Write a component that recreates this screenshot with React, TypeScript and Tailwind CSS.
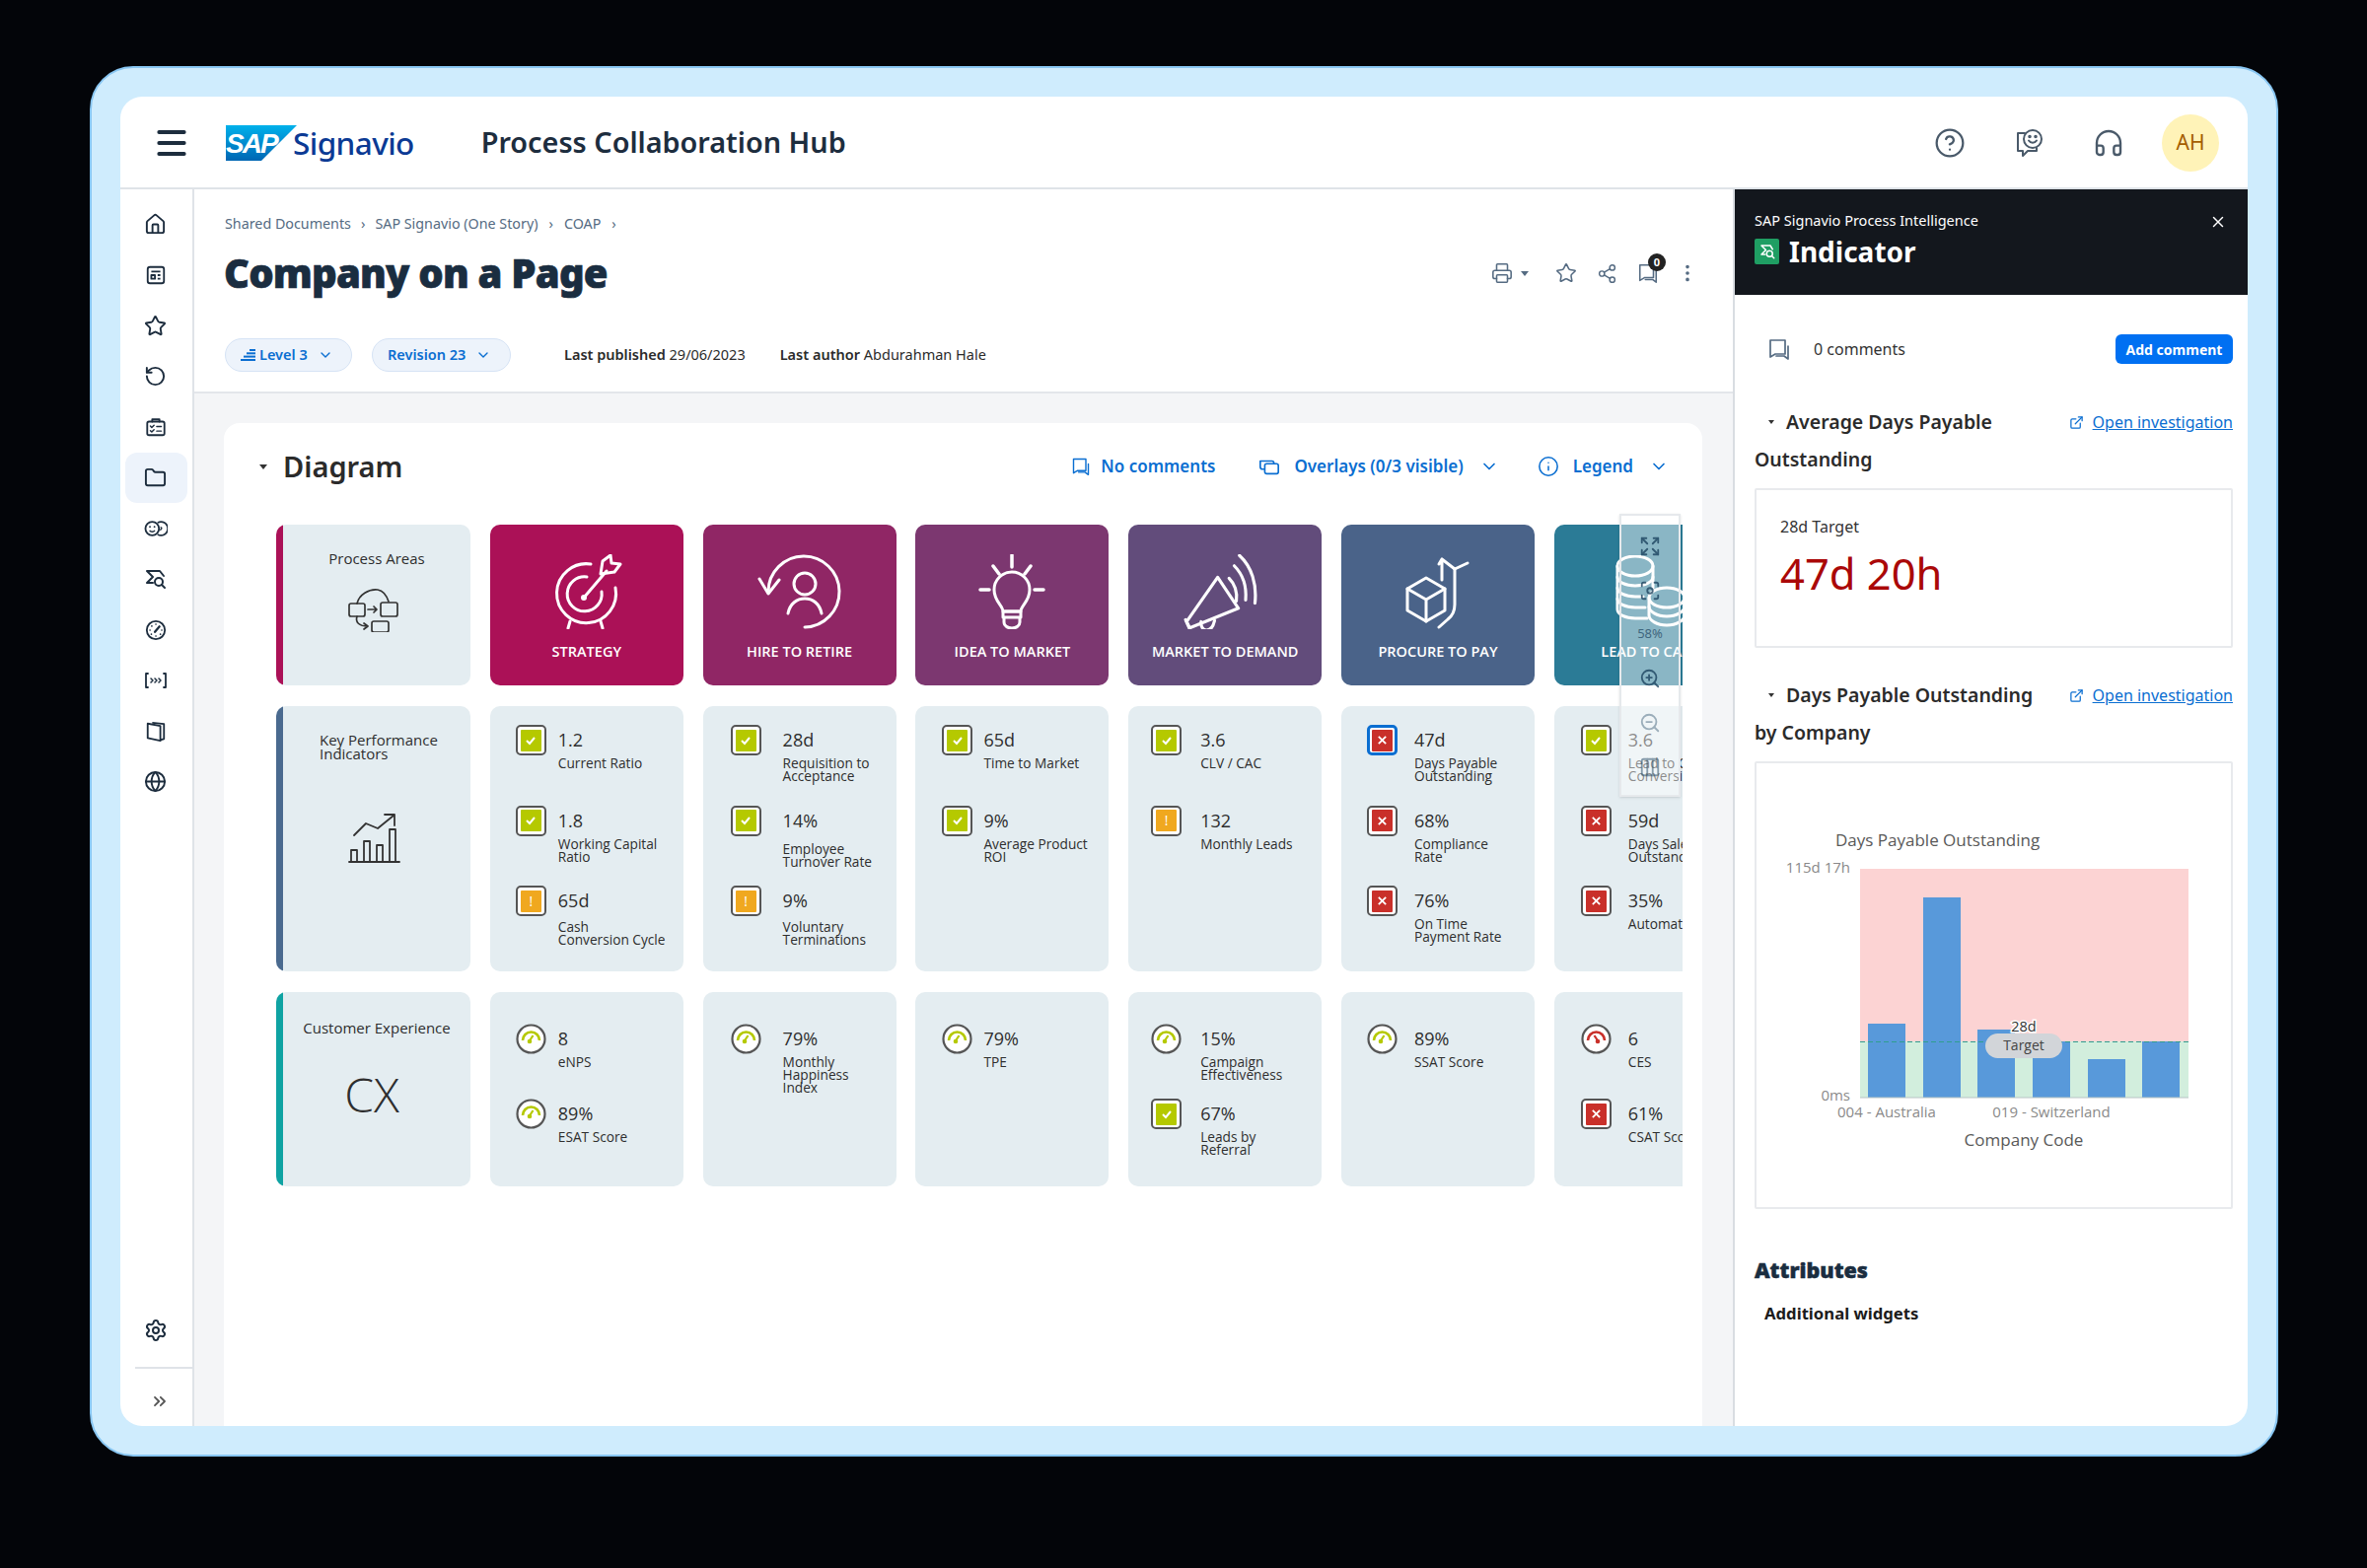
import React from "react";
import {
  Home, Star, RotateCcw, Folder, Globe, Settings, ChevronsRight, CircleHelp, Headphones, Printer, Share2,
  EllipsisVertical, Info, ChevronDown, X, ExternalLink, Expand, Focus, ZoomIn, ZoomOut, Columns3, Menu,
} from "lucide-react";

const ink = "#1d2d3e";

const Bubble = ({ size = 22, color = "#556b82" }: { size?: number; color?: string }) => (
  <svg width={size} height={size} viewBox="0 0 24 24" fill="none" stroke={color} strokeWidth={1.7} strokeLinejoin="round" strokeLinecap="round">
    <path d="M3 3h15v14H8l-5 3z" />
    <path d="M21 9v13l-4-3H9" />
  </svg>
);

const SideNews = () => (
  <svg width="22" height="22" viewBox="0 0 24 24" fill="none" stroke={ink} strokeWidth="2" strokeLinejoin="round">
    <rect x="3" y="3" width="18" height="18" rx="2.5" />
    <path d="M7 8h10M7 12h4v4H7zM14 12h3M14 16h3" />
  </svg>
);
const SideCase = () => (
  <svg width="22" height="22" viewBox="0 0 24 24" fill="none" stroke={ink} strokeWidth="2" strokeLinejoin="round" strokeLinecap="round">
    <path d="M8 6V3.5h8V6" />
    <rect x="2.5" y="6" width="19" height="15" rx="2" />
    <path d="M6 11l1.5 1.5L10 10M6 16l1.5 1.5L10 15M13 11.5h5M13 16.5h5" strokeWidth="1.6" />
  </svg>
);
const SideFaces = () => (
  <svg width="24" height="22" viewBox="0 0 26 24" fill="none" stroke={ink} strokeWidth="2">
    <circle cx="9" cy="12" r="7.5" />
    <path d="M15 5.5a7.5 7.5 0 1 1 0 13" />
    <path d="M6 14c1.500 2 4.500 2 6 0M18 10.500c2 0 2 3-1 3" strokeWidth="1.500" />
    <circle cx="6.500" cy="10" r="1" fill={ink} stroke="none" />
    <circle cx="11.500" cy="10" r="1" fill={ink} stroke="none" />
  </svg>
);
const SideSigma = () => (
  <svg width="24" height="22" viewBox="0 0 24 22" fill="none" stroke={ink} strokeWidth="2" strokeLinecap="round" strokeLinejoin="round">
    <path d="M20 8L16 3H3l6 6-6 6h6" />
    <circle cx="15" cy="14" r="4" />
    <path d="M18 17l3 3" />
  </svg>
);
const SideGauge = () => (
  <svg width="22" height="22" viewBox="0 0 24 24" fill="none" stroke={ink} strokeWidth="2" strokeLinecap="round">
    <circle cx="12" cy="12" r="10" />
    <path d="M11 14l5-6" strokeWidth="2.500" />
    <path d="M5.500 12h.1M7.500 7.500h.1M12 5.500h.1M18.500 12h.1M7 16.500h.1M17 16.500h.1M12 18.500h.1" strokeWidth="1.800" />
  </svg>
);
const SideBracket = () => (
  <svg width="24" height="22" viewBox="0 0 24 22" fill="none" stroke={ink} strokeWidth="1.800" strokeLinecap="round" strokeLinejoin="round">
    <path d="M4 4H2v14h2M20 4h2v14h-2" />
    <path d="M7 9l2 2-2 2M11 9l2 2-2 2M15 9l2 2-2 2" strokeWidth="1.500" />
  </svg>
);
const SideBook = () => (
  <svg width="22" height="22" viewBox="0 0 24 24" fill="none" stroke={ink} strokeWidth="2" strokeLinejoin="round">
    <path d="M3 3l14 2.500V22L3 19z" />
    <path d="M8 2l13 1.500V20l-4 1" />
  </svg>
);

const GreenSigma = () => (
  <span className="flex h-[26px] w-[25px] items-center justify-center rounded-[2px] bg-[#1f9e63]">
    <svg width="18" height="18" viewBox="0 0 24 22" fill="none" stroke="#fff" strokeWidth="2" strokeLinecap="round" strokeLinejoin="round">
      <path d="M19 8L16 3H4l6 6-6 6h5" />
      <circle cx="15" cy="14" r="4" />
      <path d="M18 17l3 3" />
    </svg>
  </span>
);

const SapLogo = () => (
  <svg width="72" height="36" viewBox="0 0 72 36">
    <defs>
      <linearGradient id="sapg" x1="0" y1="0" x2="0" y2="1">
        <stop offset="0" stopColor="#00b1eb" />
        <stop offset="1" stopColor="#0066b3" />
      </linearGradient>
    </defs>
    <polygon points="0,0 72,0 36,36 0,36" fill="url(#sapg)" />
    <text x="0" y="28" fontFamily="'Liberation Sans', sans-serif" fontWeight="700" fontStyle="italic" fontSize="28" fill="#fff" letterSpacing="-2">SAP</text>
  </svg>
);

/* ---------- process pictograms ---------- */
const picto = { fill: "none", stroke: "#fff", strokeWidth: 3, strokeLinecap: "round" as const, strokeLinejoin: "round" as const };

const TargetIcon = () => (
  <svg width="72" height="76" viewBox="0 0 72 76" {...picto}>
    <path d="M40 10A30 30 0 1 0 65 34" />
    <path d="M36 23A17.500 17.500 0 1 0 51 38" />
    <path d="M33 44L56 17" />
    <circle cx="33" cy="44" r="1.500" />
    <path d="M50 20l2-13 8-6 1 8 9 1-6 8z" />
    <path d="M19 68l-2 7M50 68l2 7" />
  </svg>
);
const CycleIcon = () => (
  <svg width="86" height="76" viewBox="0 0 86 76" {...picto}>
    <path d="M11 38A36 36 0 1 1 48 74" />
    <path d="M2 25l9 15 11-14" />
    <circle cx="48" cy="30" r="11" />
    <path d="M31 60c2-10 9-15 17-15s15 5 17 15" />
  </svg>
);
const BulbIcon = () => (
  <svg width="72" height="76" viewBox="0 0 72 76" {...picto}>
    <path d="M36 1v12M17 12l6 8M55 12l-6 8M4 36h9M59 36h9" strokeWidth="3.500" />
    <path d="M27 58c0-6-9-10-9-22a18 18 0 0 1 36 0c0 12-9 16-9 22z" />
    <path d="M27 58h18v6H27zM28 64h16v5a8 6 0 0 1-16 0z" />
  </svg>
);
const MegaIcon = () => (
  <svg width="84" height="76" viewBox="0 0 80 72" {...picto}>
    <path d="M33 22L3 65l3 6 47-19z" />
    <path d="M2 63l4 9M17 65c-1 10 10 12 13-1" />
    <path d="M44 23c6 6 8 14 7 22" />
    <path d="M49 11c9 9 12 21 11 33" />
    <path d="M54 1c12 11 17 28 15 46" />
  </svg>
);
const BoxIcon = () => (
  <svg width="68" height="76" viewBox="0 0 68 76" {...picto}>
    <path d="M22 24L3 35v22l19 11 19-11V35z" />
    <path d="M3 35l19 11 19-11M22 46v22" />
    <path d="M38 26V5M38 5l-3 5M38 5l13 10 13-6" />
    <path d="M51 15v36c0 8-3 12-7 15l-9 8" />
  </svg>
);
const CoinsIcon = () => (
  <svg width="72" height="74" viewBox="0 0 72 74" {...picto}>
    <ellipse cx="20" cy="11" rx="18" ry="10" />
    <path d="M2 11v44c0 5 8 9 18 9h12" />
    <path d="M38 11v22" />
    <path d="M2 22c0 5 8 9 18 9s18-4 18-9M2 33c0 5 8 9 18 9h8M2 44c0 5 8 9 18 9h10" />
    <ellipse cx="52" cy="43" rx="18" ry="10" />
    <path d="M34 43v18c0 5 8 10 18 10s18-5 18-10V43" />
    <path d="M34 52c0 5 8 10 18 10s18-5 18-10" />
  </svg>
);

const FlowIcon = () => (
  <svg width="54" height="44" viewBox="0 0 54 44" fill="none" stroke="#333" strokeWidth="1.700" strokeLinejoin="round" strokeLinecap="round">
    <rect x="1" y="15" width="16" height="13" rx="2" />
    <rect x="33" y="14" width="17" height="14" rx="2" />
    <rect x="24" y="33" width="17" height="11" rx="2" />
    <path d="M20 21h9M26 18l3 3-3 3" />
    <path d="M9 15C11 6 21 0 30 1c6 1 9 6 11 12" />
    <path d="M9 28c-2 6 2 10 11 10M16 35l4 3-4 3" />
  </svg>
);
const KpiIcon = () => (
  <svg width="54" height="50" viewBox="0 0 54 50" fill="none" stroke="#333" strokeWidth="1.800" strokeLinejoin="round" strokeLinecap="round">
    <path d="M1 49h51" />
    <path d="M3 49V37h6v12M16 49V28h6v21M29 49V32h6v17M42 49V16h6v33" />
    <path d="M6 22L18 10l12 5L46 2M37 1h10v11" />
  </svg>
);

/* ---------- status ---------- */
type Status = "ok" | "warn" | "bad" | "sel" | "gok" | "gbad";

const StatusIcon = ({ s }: { s: Status }) => {
  if (s === "gok" || s === "gbad") {
    const c = s === "gok" ? "#b5c900" : "#c9302a";
    return (
      <svg width="31" height="31" viewBox="0 0 31 31" fill="#fff" className="shrink-0">
        <circle cx="15.500" cy="15.500" r="14" stroke="#555" strokeWidth="2.200" />
        <path d="M7 17a8.500 8.500 0 0 1 17 0" fill="none" stroke={c} strokeWidth="2.600" />
        {s === "gok" ? (
          <path d="M13.500 18l4-6" stroke={c} strokeWidth="2.200" />
        ) : (
          <path d="M17.500 18l-4-6" stroke={c} strokeWidth="2.200" />
        )}
        <circle cx={s === "gok" ? 14 : 17} cy="18" r="2.300" fill={c} />
      </svg>
    );
  }
  const bg = s === "ok" ? "bg-[#b5c900]" : s === "warn" ? "bg-[#f0a81f]" : "bg-[#c9302a]";
  const frame = s === "sel" ? "border-[#0a6ed1] border-[3px]" : "border-[#555] border-2";
  return (
    <span className={`flex h-[31px] w-[31px] shrink-0 items-center justify-center rounded-[5px] bg-white ${frame}`}>
      <span className={`flex h-[22px] w-[21px] items-center justify-center rounded-[1px] text-white ${bg}`}>
        {s === "ok" && (
          <svg width="12" height="12" viewBox="0 0 12 12" fill="none" stroke="#fff" strokeWidth="2"><path d="M2 6l3 3 5-6" /></svg>
        )}
        {s === "warn" && <span className="font-['Open_Sans',sans-serif] text-[14px] leading-none">!</span>}
        {(s === "bad" || s === "sel") && (
          <svg width="11" height="11" viewBox="0 0 12 12" fill="none" stroke="#fff" strokeWidth="2"><path d="M2 2l8 8M10 2l-8 8" /></svg>
        )}
      </span>
    </span>
  );
};

type K = { s: Status; v: string; l: string[]; d?: number };

const Cell = ({ items, pl, gap, row3 }: { items: K[]; pl: number; gap: number; row3?: boolean }) => (
  <div
    className={`flex h-full flex-col rounded-[10px] bg-[#e4edf1] font-['Open_Sans',sans-serif] text-[#2e2e2e] ${row3 ? "pt-[32px]" : "pt-[19px]"}`}
    style={{ paddingLeft: pl }}
  >
    {items.map((k) => (
      <div key={k.v + k.l[0]} className={`flex ${row3 ? "h-[76px]" : "h-[81.500px]"}`} style={{ columnGap: gap }}>
        <StatusIcon s={k.s} />
        <div className="flex flex-col pt-[3px]">
          <span className="text-[18px] font-medium leading-[24px] whitespace-nowrap">{k.v}</span>
          <span className="text-[13.700px] font-medium leading-[13px] whitespace-nowrap" style={{ marginTop: 5 + (k.d ?? 0) }}>
            {k.l.map((t) => (
              <span key={t} className="block">{t}</span>
            ))}
          </span>
        </div>
      </div>
    ))}
  </div>
);

const Rail = ({ color, children }: { color: string; children: React.ReactNode }) => (
  <div className="h-full overflow-hidden rounded-[10px] bg-[#e4edf1] font-['Open_Sans',sans-serif] text-[#2e2e2e]">
    <div className="flex h-full border-l-[7px]" style={{ borderColor: color }}>
      <div className="flex-1">{children}</div>
    </div>
  </div>
);

const Proc = ({ color, label, icon }: { color: string; label: string; icon: React.ReactNode }) => (
  <div className="flex h-full flex-col items-center rounded-[10px] pt-[30px] font-['Open_Sans',sans-serif] text-white" style={{ backgroundColor: color }}>
    <div className="flex h-[76px] items-center justify-center">{icon}</div>
    <span className="mt-[13px] whitespace-nowrap text-[14.500px] font-semibold leading-[20px]">{label}</span>
  </div>
);

const cols = [
  { pl: 26, gap: 12 },
  { pl: 28, gap: 22 },
  { pl: 27, gap: 11 },
  { pl: 23, gap: 19 },
  { pl: 26, gap: 17 },
  { pl: 27, gap: 17 },
];

const kpis: K[][] = [
  [
    { s: "ok", v: "1.2", l: ["Current Ratio"] },
    { s: "ok", v: "1.8", l: ["Working Capital", "Ratio"] },
    { s: "warn", v: "65d", l: ["Cash", "Conversion Cycle"], d: 3 },
  ],
  [
    { s: "ok", v: "28d", l: ["Requisition to", "Acceptance"] },
    { s: "ok", v: "14%", l: ["Employee", "Turnover Rate"], d: 5 },
    { s: "warn", v: "9%", l: ["Voluntary", "Terminations"], d: 3 },
  ],
  [
    { s: "ok", v: "65d", l: ["Time to Market"] },
    { s: "ok", v: "9%", l: ["Average Product", "ROI"] },
  ],
  [
    { s: "ok", v: "3.6", l: ["CLV / CAC"] },
    { s: "warn", v: "132", l: ["Monthly Leads"] },
  ],
  [
    { s: "sel", v: "47d", l: ["Days Payable", "Outstanding"] },
    { s: "bad", v: "68%", l: ["Compliance", "Rate"] },
    { s: "bad", v: "76%", l: ["On Time", "Payment Rate"] },
  ],
  [
    { s: "ok", v: "3.6", l: ["Lead to Cash", "Conversion"] },
    { s: "bad", v: "59d", l: ["Days Sales", "Outstanding"] },
    { s: "bad", v: "35%", l: ["Automation"] },
  ],
];

const cx: K[][] = [
  [
    { s: "gok", v: "8", l: ["eNPS"] },
    { s: "gok", v: "89%", l: ["ESAT Score"] },
  ],
  [{ s: "gok", v: "79%", l: ["Monthly", "Happiness", "Index"] }],
  [{ s: "gok", v: "79%", l: ["TPE"] }],
  [
    { s: "gok", v: "15%", l: ["Campaign", "Effectiveness"] },
    { s: "ok", v: "67%", l: ["Leads by", "Referral"] },
  ],
  [{ s: "gok", v: "89%", l: ["SSAT Score"] }],
  [
    { s: "gbad", v: "6", l: ["CES"] },
    { s: "bad", v: "61%", l: ["CSAT Score"] },
  ],
];

const sideIcons = [
  <Home key="a" size={23} color={ink} strokeWidth={2} />,
  <SideNews key="b" />,
  <Star key="c" size={23} color={ink} strokeWidth={2} />,
  <RotateCcw key="d" size={23} color={ink} strokeWidth={2} />,
  <SideCase key="e" />,
  <Folder key="f" size={23} color={ink} strokeWidth={2} />,
  <SideFaces key="g" />,
  <SideSigma key="h" />,
  <SideGauge key="i" />,
  <SideBracket key="j" />,
  <SideBook key="k" />,
  <Globe key="l" size={23} color={ink} strokeWidth={2} />,
];

const Section = ({ a, b }: { a: string; b: string }) => (
  <div>
    <div className="flex items-center justify-between">
      <div className="flex items-center">
        <span className="ml-[14px] mr-[12px] h-0 w-0 border-x-[3.500px] border-t-[4px] border-x-transparent border-t-[#333]" />
        <span className="text-[19.500px] font-semibold leading-[38px] text-[#2b2b2b]">{a}</span>
      </div>
      <div className="flex items-center gap-[9px] text-[16px] text-[#0a6ed1]">
        <ExternalLink size={15} />
        <span className="underline">Open investigation</span>
      </div>
    </div>
    <div className="text-[19.500px] font-semibold leading-[38px] text-[#2b2b2b]">{b}</div>
  </div>
);

const Chart = () => {
  const bars = [
    [1894, 1037],
    [1950, 909],
    [2005, 1043],
    [2061, 1055],
    [2117, 1073],
    [2172, 1055],
  ];
  return (
    <svg width="482" height="451" viewBox="1781 773 482 451" fontFamily="'Open Sans', sans-serif">
      <text x="1861" y="857" fontSize="17" fill="#595959">Days Payable Outstanding</text>
      <text x="1876" y="884" fontSize="15" fill="#8a8a8a" textAnchor="end">115d 17h</text>
      <text x="1876" y="1115" fontSize="15" fill="#8a8a8a" textAnchor="end">0ms</text>
      <rect x="1886" y="880" width="333" height="175" fill="#fcd3d3" />
      <rect x="1886" y="1055" width="333" height="57" fill="#d2eedd" />
      {bars.map(([x, y]) => (
        <rect key={x} x={x} y={y} width="38" height={1112 - y} fill="#5899da" />
      ))}
      <line x1="1886" x2="2219" y1="1055.500" y2="1055.500" stroke="#2f9e8f" strokeWidth="1" strokeDasharray="5 3" />
      <line x1="1886" x2="2219" y1="1112" y2="1112" stroke="#b8c4c4" strokeWidth="1" />
      <rect x="2013" y="1047" width="78" height="25" rx="12.500" fill="#d2d5d9" />
      <text x="2052" y="1045" fontSize="14.500" fill="#333" textAnchor="middle" stroke="#fff" strokeWidth="3" paintOrder="stroke">28d</text>
      <text x="2052" y="1064" fontSize="14" fill="#444" textAnchor="middle">Target</text>
      <text x="1913" y="1132" fontSize="15" fill="#8a8a8a" textAnchor="middle">004 - Australia</text>
      <text x="2080" y="1132" fontSize="15" fill="#8a8a8a" textAnchor="middle">019 - Switzerland</text>
      <text x="2052" y="1161" fontSize="17" fontWeight="500" fill="#595959" textAnchor="middle">Company Code</text>
    </svg>
  );
};

export default function App() {
  return (
    <div className="h-[1590px] w-[2400px] overflow-hidden bg-[#030509] pl-[91px] pt-[67px] font-['Noto_Sans',sans-serif]">
      <div className="h-[1410px] w-[2219px] rounded-[44px] border-2 border-[#88c6f2] bg-[#cfecfd] p-[29px]">
        <div className="flex h-full flex-col overflow-hidden rounded-[22px] bg-white">
          {/* top bar */}
          <header className="flex h-[94px] shrink-0 items-center border-b-2 border-[#dfe3e8] pl-[33px] pr-[29px] pt-[1px]">
            <Menu size={38} color={ink} strokeWidth={2.500} />
            <div className="ml-[36px] flex items-center">
              <SapLogo />
              <span className="-ml-[4px] text-[31.500px] font-medium leading-none tracking-[-0.6px] text-[#0b3a94]">Signavio</span>
            </div>
            <span className="ml-[68px] text-[28.800px] font-semibold leading-none text-[#1d2d3e]">Process Collaboration Hub</span>
            <div className="ml-auto flex items-center">
              <CircleHelp size={32} color="#4a5a6a" strokeWidth={1.700} />
              <span className="ml-[48px] flex h-[32px] w-[32px] items-center justify-center">
                <svg width="32" height="32" viewBox="0 0 32 32" fill="none" stroke="#4a5a6a" strokeWidth="2" strokeLinejoin="round" strokeLinecap="round">
                  <path d="M12 6H5v18h5v5l5-5h9v-3" />
                  <circle cx="20" cy="12" r="9" />
                  <path d="M16 13.500c2 3 6 3 8 0" />
                  <circle cx="17" cy="9.500" r=".8" fill="#4a5a6a" />
                  <circle cx="23" cy="9.500" r=".8" fill="#4a5a6a" />
                </svg>
              </span>
              <Headphones size={32} color="#4a5a6a" strokeWidth={1.800} className="ml-[49px]" />
              <span className="ml-[38px] flex h-[58px] w-[58px] items-center justify-center rounded-full bg-[#fff3b8] text-[21px] text-[#a45d00]">AH</span>
            </div>
          </header>

          <div className="flex min-h-0 flex-1">
            {/* left rail */}
            <aside className="flex w-[75px] shrink-0 flex-col border-r-2 border-[#dfe3e8] pt-[10px]">
              {sideIcons.map((icon, i) => (
                <div
                  key={i}
                  className={`mx-[5px] flex h-[51.400px] items-center justify-center rounded-[12px] pr-[2px] ${i === 5 ? "bg-[#edf3fb]" : ""}`}
                >
                  {icon}
                </div>
              ))}
              <div className="mt-auto flex h-[36px] items-center justify-center pr-[2px]">
                <Settings size={24} color={ink} strokeWidth={2} />
              </div>
              <div className="ml-[15px] mt-[19px] h-[2px] bg-[#dfe3e8]" />
              <div className="flex h-[58px] items-center justify-center pl-[6px] pt-[8px]">
                <ChevronsRight size={20} color="#555" strokeWidth={2.200} />
              </div>
            </aside>

            {/* main */}
            <main className="flex min-w-0 flex-1 flex-col">
              <div className="h-[207px] shrink-0 border-b-2 border-[#e3e6ea] pl-[31px] pr-[36px] pt-[25px]">
                <div className="flex items-center text-[14.300px] leading-[20px] text-[#556b82]">
                  <span>Shared Documents</span>
                  <span className="mx-[10px]">›</span>
                  <span>SAP Signavio (One Story)</span>
                  <span className="mx-[11px]">›</span>
                  <span>COAP</span>
                  <span className="mx-[11px]">›</span>
                </div>
                <div className="mt-[16px] flex h-[48px] items-center justify-between">
                  <h1 className="-ml-[1px] text-[40px] font-black leading-[48px] tracking-[-0.8px] text-[#1a2d40] [-webkit-text-stroke:0.7px_#1a2d40]">Company on a Page</h1>
                  <div className="flex items-center text-[#556b82]">
                    <Printer size={22} strokeWidth={1.700} />
                    <span className="ml-[8px] h-0 w-0 border-x-[4px] border-t-[5px] border-x-transparent border-t-[#556b82]" />
                    <Star size={22} strokeWidth={1.700} className="ml-[27px]" />
                    <Share2 size={21} strokeWidth={1.700} className="ml-[20px]" />
                    <span className="relative ml-[20px]">
                      <Bubble />
                      <span className="absolute -right-[7px] -top-[9px] flex h-[18px] w-[18px] items-center justify-center rounded-full bg-[#222] text-[11px] font-bold text-white">0</span>
                    </span>
                    <EllipsisVertical size={22} strokeWidth={2} className="ml-[18px] -mr-[1px]" />
                  </div>
                </div>
                <div className="mt-[42px] flex items-center">
                  <span className="flex h-[34px] w-[129px] items-center rounded-full border border-[#d6e3f5] bg-[#edf3fb] pl-[15px] text-[14.500px] font-semibold text-[#0a6ed1]">
                    <svg width="16" height="12" viewBox="0 0 16 12" fill="#0a6ed1" className="mr-[3px]">
                      <rect x="9" y="0" width="6" height="2" />
                      <rect x="6" y="3.300" width="9" height="2" />
                      <rect x="3" y="6.600" width="12" height="2" />
                      <rect x="0" y="10" width="15" height="2" />
                    </svg>
                    Level 3
                    <ChevronDown size={16} className="ml-[10px]" />
                  </span>
                  <span className="ml-[20px] flex h-[34px] w-[141px] items-center rounded-full border border-[#d6e3f5] bg-[#edf3fb] pl-[15px] text-[14.500px] font-semibold text-[#0a6ed1]">
                    Revision 23
                    <ChevronDown size={16} className="ml-[10px]" />
                  </span>
                  <span className="ml-[54px] text-[14.500px] text-[#2b2b2b]">
                    <b className="font-semibold">Last published</b> 29/06/2023
                  </span>
                  <span className="ml-[35px] text-[14.500px] text-[#2b2b2b]">
                    <b className="font-semibold">Last author</b> Abdurahman Hale
                  </span>
                </div>
              </div>

              <div className="flex min-h-0 flex-1 flex-col bg-[#f4f5f7] pl-[30px] pr-[31px] pt-[30px]">
                <section className="relative flex-1 rounded-t-[16px] bg-white pl-[53px] pr-[20px]">
                  <div className="flex h-[103px] items-center pb-[15px]">
                    <span className="-ml-[17px] mr-[16px] h-0 w-0 border-x-[4px] border-t-[5px] border-x-transparent border-t-[#333]" />
                    <h2 className="-mt-[2px] text-[29px] font-semibold leading-none text-[#2b2b2b]">Diagram</h2>
                    <div className="ml-auto flex items-center pr-[14px] text-[17px] font-semibold text-[#0a6ed1]">
                      <Bubble size={20} color="#0a6ed1" />
                      <span className="ml-[10px]">No comments</span>
                      <svg width="22" height="22" viewBox="0 0 24 24" fill="none" stroke="#0a6ed1" strokeWidth="1.800" strokeLinejoin="round" className="ml-[44px]">
                        <rect x="7" y="9" width="15" height="11" rx="2" />
                        <path d="M7 15H4.500A2.500 2.500 0 0 1 2 12.500V6h13a2 2 0 0 1 2 2v1" />
                      </svg>
                      <span className="ml-[14px]">Overlays (0/3 visible)</span>
                      <ChevronDown size={20} className="ml-[16px]" />
                      <Info size={22} strokeWidth={1.700} className="ml-[39px]" />
                      <span className="ml-[14px]">Legend</span>
                      <ChevronDown size={20} className="ml-[16px]" />
                    </div>
                  </div>

                  <div className="overflow-hidden">
                    <div className="grid w-max grid-cols-[197px_repeat(6,196px)] grid-rows-[163px_269px_197px] gap-x-[19.800px] gap-y-[21px]">
                      <Rail color="#ab1157">
                        <div className="flex h-full flex-col items-center pt-[24px]">
                          <span className="text-[15px] font-medium leading-[20px]">Process Areas</span>
                          <div className="mt-[21px] pr-[4px]"><FlowIcon /></div>
                        </div>
                      </Rail>
                      <Proc color="#ab1157" label="STRATEGY" icon={<TargetIcon />} />
                      <Proc color="#902665" label="HIRE TO RETIRE" icon={<CycleIcon />} />
                      <Proc color="#7c3770" label="IDEA TO MARKET" icon={<BulbIcon />} />
                      <Proc color="#624c7b" label="MARKET TO DEMAND" icon={<MegaIcon />} />
                      <Proc color="#4a6389" label="PROCURE TO PAY" icon={<BoxIcon />} />
                      <Proc color="#2b7b96" label="LEAD TO CASH" icon={<CoinsIcon />} />

                      <Rail color="#4a6a8f">
                        <div className="flex h-full flex-col pt-[27px]">
                          <span className="pl-[37px] text-[15px] font-medium leading-[14px]">Key Performance<br />Indicators</span>
                          <div className="mt-[54px] flex justify-center pr-[4px]"><KpiIcon /></div>
                        </div>
                      </Rail>
                      {kpis.map((items, i) => (
                        <Cell key={i} items={items} pl={cols[i].pl} gap={cols[i].gap} />
                      ))}

                      <Rail color="#0fa3a3">
                        <div className="flex h-full flex-col items-center pt-[26px]">
                          <span className="whitespace-nowrap text-[15px] font-medium leading-[20px]">Customer Experience</span>
                          <span className="mt-[28px] pr-[10px] text-[48px] font-light leading-[60px]">CX</span>
                        </div>
                      </Rail>
                      {cx.map((items, i) => (
                        <Cell key={i} items={items} pl={cols[i].pl} gap={cols[i].gap} row3 />
                      ))}
                    </div>
                  </div>

                  {/* zoom controls, floating over the canvas */}
                  <div className="absolute left-[1415px] top-[92px] flex h-[287px] w-[62px] flex-col items-center border-2 border-[#e6e9ec] bg-white/45 text-[#1d4460] shadow-sm">
                    <Expand size={22} className="mt-[20px] opacity-80" />
                    <Focus size={22} className="mt-[23px] opacity-80" />
                    <span className="mt-[24px] text-[13px] leading-[16px] opacity-70">58%</span>
                    <ZoomIn size={22} className="mt-[27px] opacity-80" />
                    <ZoomOut size={22} className="mt-[23px] opacity-40" />
                    <Columns3 size={22} className="mt-[23px] opacity-50" />
                  </div>
                </section>
              </div>
            </main>

            {/* indicator panel */}
            <aside className="flex w-[522px] shrink-0 flex-col border-l-2 border-[#d9dde2]">
              <div className="relative h-[107px] shrink-0 bg-[#13171d] pl-[20px] pt-[20px] text-white">
                <div className="text-[14.500px] leading-[22px]">SAP Signavio Process Intelligence</div>
                <div className="mt-[3px] flex items-center gap-[10px]">
                  <GreenSigma />
                  <span className="text-[28px] font-bold leading-[36px]">Indicator</span>
                </div>
                <X size={18} strokeWidth={2} className="absolute right-[21px] top-[24px]" />
              </div>
              <div className="flex min-h-0 flex-1 flex-col pl-[20px] pr-[15px]">
                <div className="mt-[40px] flex h-[30px] items-center">
                  <span className="ml-[13px]"><Bubble size={24} /></span>
                  <span className="ml-[23px] text-[16px] text-[#333]">0 comments</span>
                  <span className="ml-auto flex h-[30px] w-[119px] items-center justify-center rounded-[6px] bg-[#0070f2] text-[14px] font-bold text-white">Add comment</span>
                </div>
                <div className="mt-[40px]"><Section a="Average Days Payable" b="Outstanding" /></div>
                <div className="mt-[10px] h-[162px] rounded-[2px] border-2 border-[#e8eaed] pl-[24px] pt-[26px]">
                  <div className="text-[16px] leading-[22px] text-[#333]">28d Target</div>
                  <div className="mt-[6px] text-[43.500px] leading-[60px] text-[#aa0808]">47d 20h</div>
                </div>
                <div className="mt-[29px]"><Section a="Days Payable Outstanding" b="by Company" /></div>
                <div className="mt-[10px] h-[454px] rounded-[2px] border-2 border-[#e8eaed]"><Chart /></div>
                <h3 className="mt-[46px] text-[21.500px] font-black leading-[32px] text-[#1a2d40] [-webkit-text-stroke:0.5px_#1a2d40]">Attributes</h3>
                <div className="ml-[10px] mt-[15px] text-[16.700px] font-bold leading-[26px] text-[#1c1c1c]">Additional widgets</div>
              </div>
            </aside>
          </div>
        </div>
      </div>
    </div>
  );
}
